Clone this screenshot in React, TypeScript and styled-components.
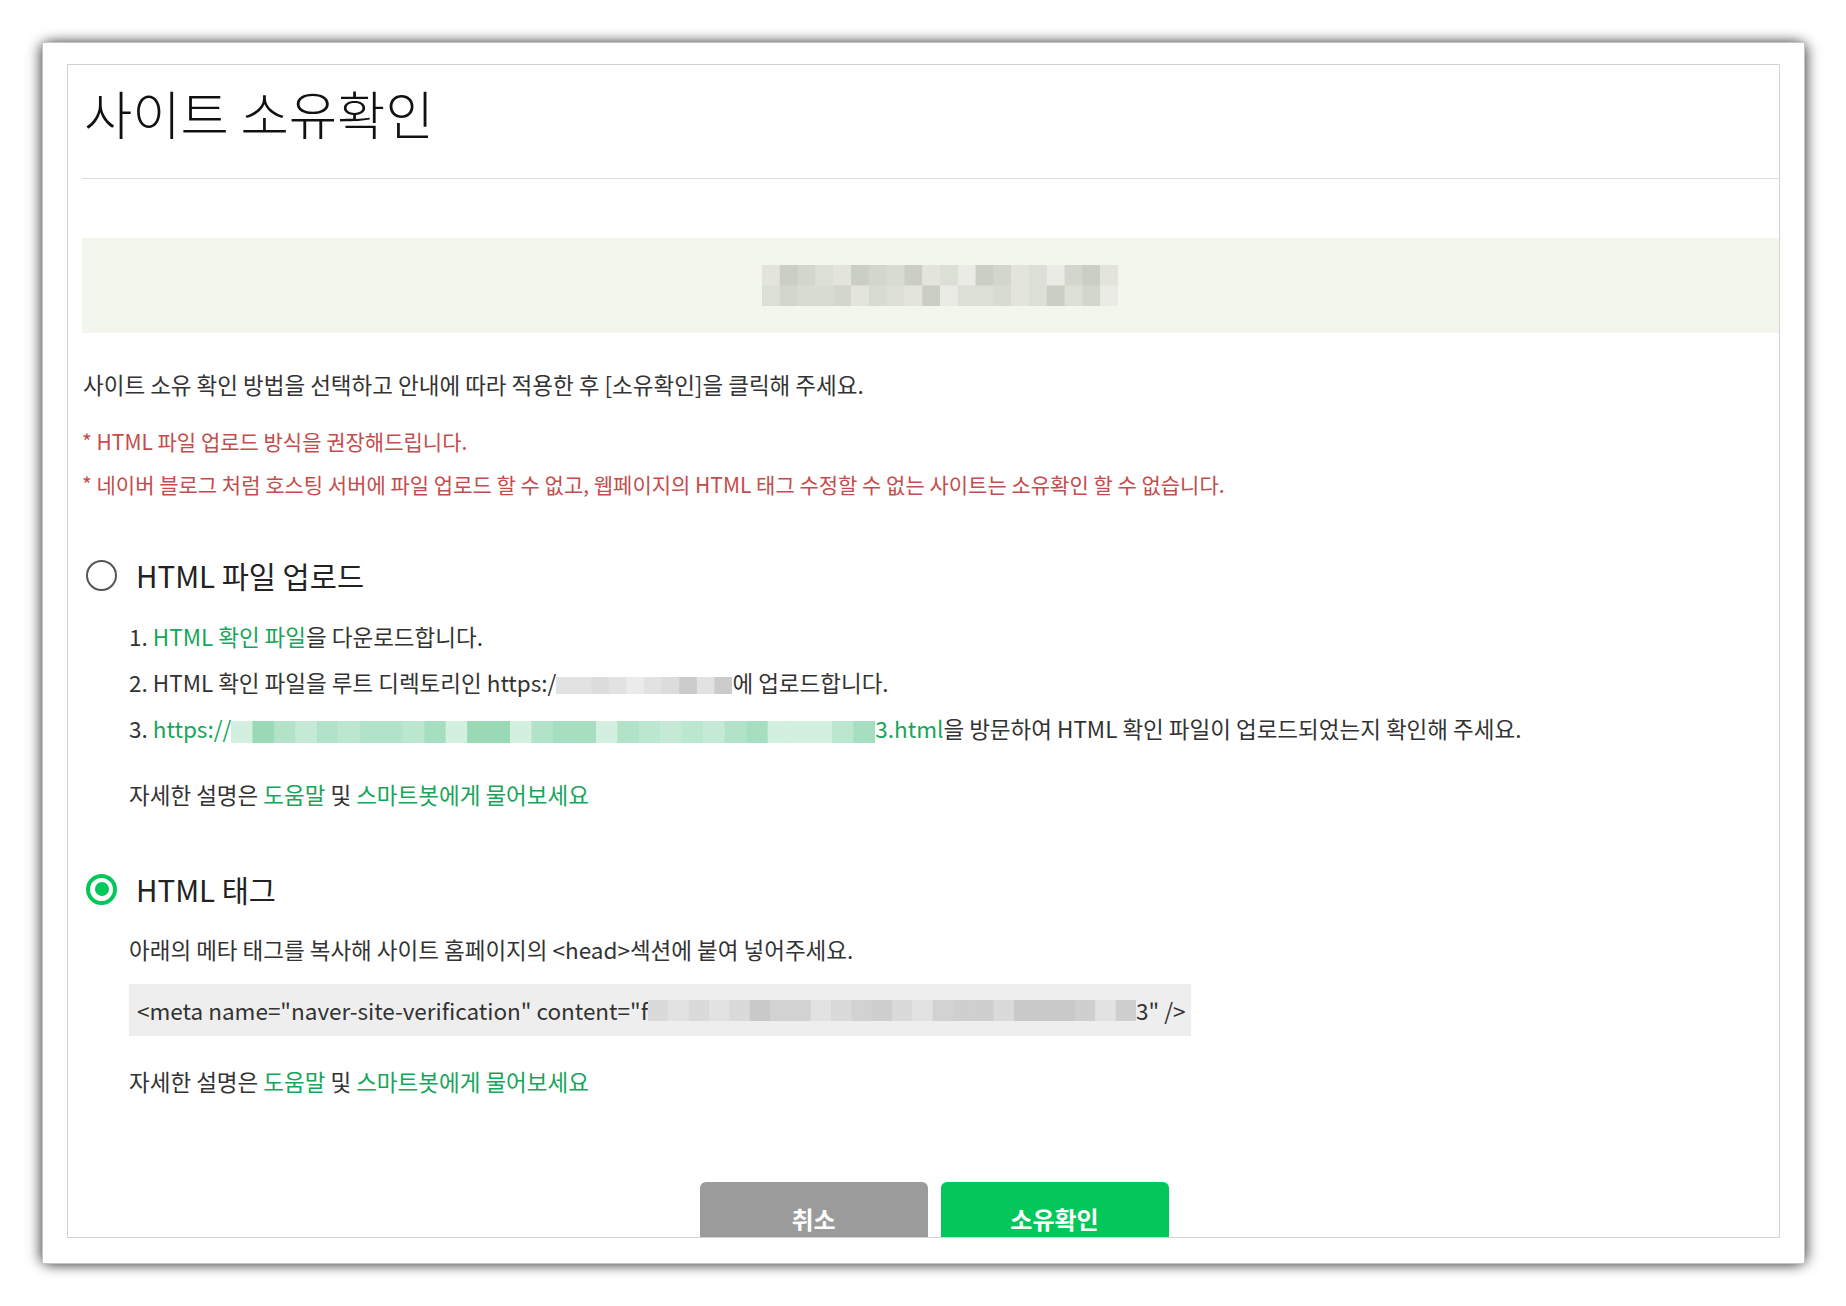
import React from 'react';
import styled, { createGlobalStyle } from 'styled-components';

const GlobalStyle = createGlobalStyle`
  html, body {
    margin: 0;
    padding: 0;
    background: #fff;
  }
  body {
    font-family: "Noto Sans CJK KR", "Noto Sans", sans-serif;
    color: #333;
  }
`;

const Page = styled.div`
  width: 1846px;
  height: 1306px;
  box-sizing: border-box;
  padding: 42px 0 0 42px;
`;

const Frame = styled.div`
  width: 1763px;
  height: 1222px;
  box-sizing: border-box;
  display: flex;
  padding: 21px 24px 25px 24px;
  background: #fff;
  border: 1px solid #c4c4c4;
  box-shadow:
    -6px 0 12px -2px rgba(0, 0, 0, 0.4),
    6px 0 12px -2px rgba(0, 0, 0, 0.4),
    0 -5px 12px -3px rgba(0, 0, 0, 0.25),
    0 6px 12px -3px rgba(0, 0, 0, 0.3);
`;

const Shot = styled.div`
  flex: 1;
  min-width: 0;
  border: 1px solid #d2d2d2;
  overflow: hidden;
  padding-left: 14px;
`;

const Content = styled.div`
  width: 1716px;
`;

const Title = styled.h1`
  margin: 0;
  padding: 16px 0 35px 2px;
  font-size: 52.5px;
  font-weight: 300;
  line-height: 62px;
  color: #111;
  border-bottom: 1px solid #dcdcdc;
`;

const Banner = styled.div`
  margin-top: 59px;
  height: 95px;
  background: #f3f6ec;
  display: flex;
  align-items: center;
  justify-content: center;
`;

const Lead = styled.p`
  margin: 36px 0 0 1px;
  font-size: 22.5px;
  line-height: 30px;
  color: #333;
`;

const Note = styled.p<{ $first?: boolean }>`
  margin: ${p => (p.$first ? '28px' : '15px')} 0 0 0;
  font-size: 21px;
  line-height: 28px;
  color: #c54c4c;
`;

const Method = styled.section<{ $gap: number }>`
  margin-top: ${p => p.$gap}px;
`;

const RadioRow = styled.label`
  display: flex;
  align-items: center;
  gap: 19px;
  height: 40px;
  font-size: 29.5px;
  color: #222;
`;

const Radio = styled.span<{ $checked?: boolean }>`
  box-sizing: border-box;
  width: 31px;
  height: 31px;
  margin-left: 4px;
  border-radius: 50%;
  background: #fff;
  border: ${p => (p.$checked ? '4px solid #03c75a' : '2.5px solid #555')};
  display: flex;
  align-items: center;
  justify-content: center;

  &::after {
    content: '';
    display: ${p => (p.$checked ? 'block' : 'none')};
    width: 14px;
    height: 14px;
    border-radius: 50%;
    background: #03c75a;
  }
`;

const Body = styled.div<{ $top: number }>`
  margin-top: ${p => p.$top}px;
  padding-left: 47px;
`;

const Step = styled.p`
  margin: 0 0 16px 0;
  font-size: 22.5px;
  line-height: 30px;
  color: #333;
  white-space: nowrap;

  &:last-child {
    margin-bottom: 0;
  }
`;

const Green = styled.span`
  color: #17a55a;
`;

const Help = styled.p<{ $top: number }>`
  margin: ${p => p.$top}px 0 0 0;
  font-size: 22.5px;
  line-height: 30px;
  color: #333;
`;

const CodeBox = styled.div`
  margin-top: 20px;
  width: 1062px;
  height: 52px;
  box-sizing: border-box;
  padding-left: 8px;
  background: #eee;
  display: flex;
  align-items: center;
  font-size: 22.5px;
  color: #333;
  white-space: pre;
`;

const Buttons = styled.div`
  margin-top: 86px;
  display: flex;
  justify-content: center;
  gap: 13px;
  padding-right: 12px;
`;

const Button = styled.button<{ $primary?: boolean }>`
  width: 228px;
  height: 72px;
  border: none;
  border-radius: 6px 6px 0 0;
  background: ${p => (p.$primary ? '#03c75a' : '#9b9b9b')};
  color: #fff;
  font-family: inherit;
  font-size: 24px;
  font-weight: 700;
  cursor: pointer;
`;

const Blur = styled.svg`
  display: inline-block;
  vertical-align: middle;
  flex-shrink: 0;
`;

interface MosaicProps {
  w: number;
  h: number;
  cols: number;
  rows: number;
  palette: string[];
  seed: number;
}

// pixelated area that hides the site address in the screenshot
const Mosaic: React.FC<MosaicProps> = ({ w, h, cols, rows, palette, seed }) => {
  let s = seed;
  const next = () => {
    s = (s * 9301 + 49297) % 233280;
    return s / 233280;
  };
  const cw = w / cols;
  const rh = h / rows;
  const cells = [];
  for (let r = 0; r < rows; r++) {
    for (let c = 0; c < cols; c++) {
      const fill = palette[Math.floor(next() * palette.length)];
      cells.push(
        <rect key={`${r}-${c}`} x={c * cw} y={r * rh} width={cw + 0.5} height={rh + 0.5} fill={fill} />
      );
    }
  }
  return (
    <Blur width={w} height={h} viewBox={`0 0 ${w} ${h}`}>
      {cells}
    </Blur>
  );
};

const bannerShades = ['#d3d6cc', '#dcdfd6', '#e3e5dd', '#cacec3', '#e9ebe4', '#d8dbd1'];
const grayShades = ['#d6d6d6', '#e2e2e2', '#cbcbcb', '#ebebeb', '#dcdcdc'];
const greenShades = ['#c4ead6', '#b2e3c8', '#a6dec0', '#d2efdf', '#bce7cf', '#9ad9b6'];
const codeShades = ['#d2d2d2', '#c9c9c9', '#dadada', '#cfcfcf', '#e2e2e2'];

export default function App() {
  return (
    <>
      <GlobalStyle />
      <Page>
        <Frame>
          <Shot>
            <Content>
              <Title>사이트 소유확인</Title>

              <Banner>
                <Mosaic w={356} h={41} cols={20} rows={2} palette={bannerShades} seed={7} />
              </Banner>

              <Lead>사이트 소유 확인 방법을 선택하고 안내에 따라 적용한 후 [소유확인]을 클릭해 주세요.</Lead>
              <Note $first>* HTML 파일 업로드 방식을 권장해드립니다.</Note>
              <Note>
                * 네이버 블로그 처럼 호스팅 서버에 파일 업로드 할 수 없고, 웹페이지의 HTML 태그 수정할 수 없는 사이트는 소유확인 할 수 없습니다.
              </Note>

              <Method $gap={57}>
                <RadioRow>
                  <Radio />
                  HTML 파일 업로드
                </RadioRow>
                <Body $top={26}>
                  <Step>
                    1. <Green>HTML 확인 파일</Green>을 다운로드합니다.
                  </Step>
                  <Step>
                    2. HTML 확인 파일을 루트 디렉토리인 https:/
                    <Mosaic w={176} h={17} cols={10} rows={1} palette={grayShades} seed={3} />
                    에 업로드합니다.
                  </Step>
                  <Step>
                    3. <Green>https://</Green>
                    <Mosaic w={644} h={22} cols={30} rows={1} palette={greenShades} seed={11} />
                    <Green>3.html</Green>을 방문하여 HTML 확인 파일이 업로드되었는지 확인해 주세요.
                  </Step>
                  <Help $top={36}>
                    자세한 설명은 <Green>도움말</Green> 및 <Green>스마트봇에게 물어보세요</Green>
                  </Help>
                </Body>
              </Method>

              <Method $gap={60}>
                <RadioRow>
                  <Radio $checked />
                  HTML 태그
                </RadioRow>
                <Body $top={25}>
                  <Step>아래의 메타 태그를 복사해 사이트 홈페이지의 &lt;head&gt;섹션에 붙여 넣어주세요.</Step>
                  <CodeBox>
                    {'<meta name="naver-site-verification" content="f'}
                    <Mosaic w={488} h={21} cols={24} rows={1} palette={codeShades} seed={5} />
                    {'3" />'}
                  </CodeBox>
                  <Help $top={30}>
                    자세한 설명은 <Green>도움말</Green> 및 <Green>스마트봇에게 물어보세요</Green>
                  </Help>
                </Body>
              </Method>

              <Buttons>
                <Button>취소</Button>
                <Button $primary>소유확인</Button>
              </Buttons>
            </Content>
          </Shot>
        </Frame>
      </Page>
    </>
  );
}
